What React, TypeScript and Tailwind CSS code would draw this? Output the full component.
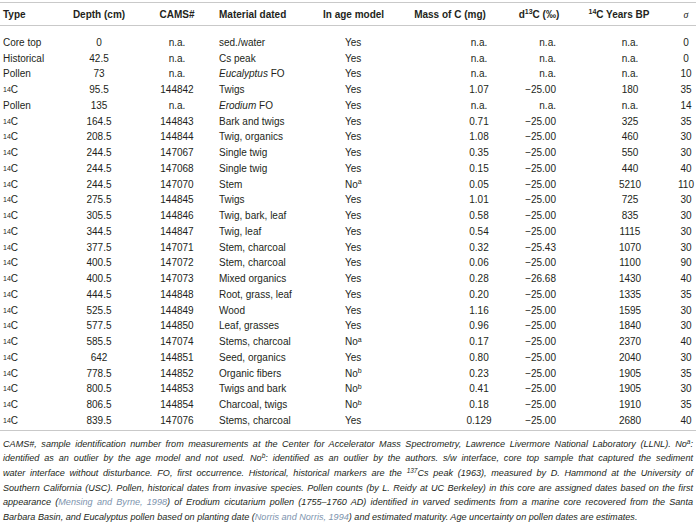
import type { ReactNode } from "react";

type Row = [string, string, string, ReactNode, ReactNode, string, string, string, string];

const C14 = (
  <>
    <sup className="text-[7px] relative -top-[1px]">14</sup>C
  </>
);
const noA = (
  <>
    No<sup className="text-[7px]">a</sup>
  </>
);
const noB = (
  <>
    No<sup className="text-[7px]">b</sup>
  </>
);

const rows: Row[] = [
  ["Core top", "0", "n.a.", "sed./water", "Yes", "n.a.", "n.a.", "n.a.", "0"],
  ["Historical", "42.5", "n.a.", "Cs peak", "Yes", "n.a.", "n.a.", "n.a.", "0"],
  ["Pollen", "73", "n.a.", <><i>Eucalyptus</i> FO</>, "Yes", "n.a.", "n.a.", "n.a.", "10"],
  ["14C", "95.5", "144842", "Twigs", "Yes", "1.07", "−25.00", "180", "35"],
  ["Pollen", "135", "n.a.", <><i>Erodium</i> FO</>, "Yes", "n.a.", "n.a.", "n.a.", "14"],
  ["14C", "164.5", "144843", "Bark and twigs", "Yes", "0.71", "−25.00", "325", "35"],
  ["14C", "208.5", "144844", "Twig, organics", "Yes", "1.08", "−25.00", "460", "30"],
  ["14C", "244.5", "147067", "Single twig", "Yes", "0.35", "−25.00", "550", "30"],
  ["14C", "244.5", "147068", "Single twig", "Yes", "0.15", "−25.00", "440", "40"],
  ["14C", "244.5", "147070", "Stem", noA, "0.05", "−25.00", "5210", "110"],
  ["14C", "275.5", "144845", "Twigs", "Yes", "1.01", "−25.00", "725", "30"],
  ["14C", "305.5", "144846", "Twig, bark, leaf", "Yes", "0.58", "−25.00", "835", "30"],
  ["14C", "344.5", "144847", "Twig, leaf", "Yes", "0.54", "−25.00", "1115", "30"],
  ["14C", "377.5", "147071", "Stem, charcoal", "Yes", "0.32", "−25.43", "1070", "30"],
  ["14C", "400.5", "147072", "Stem, charcoal", "Yes", "0.06", "−25.00", "1100", "90"],
  ["14C", "400.5", "147073", "Mixed organics", "Yes", "0.28", "−26.68", "1430", "40"],
  ["14C", "444.5", "144848", "Root, grass, leaf", "Yes", "0.20", "−25.00", "1335", "35"],
  ["14C", "525.5", "144849", "Wood", "Yes", "1.16", "−25.00", "1595", "30"],
  ["14C", "577.5", "144850", "Leaf, grasses", "Yes", "0.96", "−25.00", "1840", "30"],
  ["14C", "585.5", "147074", "Stems, charcoal", noA, "0.17", "−25.00", "2370", "40"],
  ["14C", "642", "144851", "Seed, organics", "Yes", "0.80", "−25.00", "2040", "30"],
  ["14C", "778.5", "144852", "Organic fibers", noB, "0.23", "−25.00", "1905", "35"],
  ["14C", "800.5", "144853", "Twigs and bark", noB, "0.41", "−25.00", "1905", "30"],
  ["14C", "806.5", "144854", "Charcoal, twigs", noB, "0.18", "−25.00", "1910", "35"],
  ["14C", "839.5", "147076", "Stems, charcoal", "Yes", "0.129", "−25.00", "2680", "40"],
];

const grid = "grid grid-cols-[60px_78px_78px_104px_80px_100px_78px_82px_36px]";

const cellCls = [
  "pl-[3px] text-left",
  "text-center",
  "text-center",
  "pl-[3px] text-left",
  "pl-[25px] text-left",
  "text-center pl-[58px]",
  "text-right pr-[22px]",
  "text-center pl-[22px]",
  "text-center pl-[16px]",
];

const headCls = [
  "pl-[3px] text-left",
  "text-center",
  "text-center",
  "pl-[3px] text-left",
  "pl-[3px] text-left",
  "text-center",
  "text-center",
  "text-center",
  "text-center pl-[16px]",
];

const ref = "text-[#7d93ad]";
const line = "text-justify [text-align-last:justify] whitespace-nowrap";

export default function App() {
  return (
    <div className="w-[696px] h-[525px] bg-white text-[#231f20] font-['Liberation_Sans',Arial,sans-serif] overflow-hidden">
      <div className="mt-[2px] border-t-[1.5px] border-[#c9c9c9]" />
      <div className={`${grid} h-[23px] items-center text-[10px] font-bold border-b-[1.5px] border-[#c9c9c9]`}>
        {[
          "Type",
          "Depth (cm)",
          "CAMS#",
          "Material dated",
          "In age model",
          "Mass of C (mg)",
          <>d<sup className="text-[7px]">13</sup>C (‰)</>,
          <><sup className="text-[7px]">14</sup>C Years BP</>,
          <span className="font-['Liberation_Serif',serif] italic font-normal">σ</span>,
        ].map((h, i) => (
          <div key={i} className={headCls[i]}>
            {h}
          </div>
        ))}
      </div>
      <div className="pt-[9px] pb-[1px] border-b-[1.5px] border-[#c9c9c9] text-[10px]">
        {rows.map((r, ri) => (
          <div key={ri} className={`${grid} h-[15.75px] items-center`}>
            {r.map((c, ci) => (
              <div key={ci} className={`${cellCls[ci]} whitespace-nowrap leading-none`}>
                {ci === 0 && c === "14C" ? C14 : c}
              </div>
            ))}
          </div>
        ))}
      </div>
      <div className="pt-[6px] px-[3px] text-[9.1px] leading-[14.6px] italic text-[#231f20]">
        <div className={line}>
          CAMS#, sample identification number from measurements at the Center for Accelerator Mass Spectrometry,
          Lawrence Livermore National Laboratory (LLNL). No<sup className="text-[6.5px]">a</sup>:
        </div>
        <div className={line}>
          identified as an outlier by the age model and not used. No<sup className="text-[6.5px]">b</sup>: identified
          as an outlier by the authors. s/w interface, core top sample that captured the sediment
        </div>
        <div className={line}>
          water interface without disturbance. FO, first occurrence. Historical, historical markers are the{" "}
          <sup className="text-[6.5px]">137</sup>Cs peak (1963), measured by D. Hammond at the University of
        </div>
        <div className={line}>
          Southern California (USC). Pollen, historical dates from invasive species. Pollen counts (by L. Reidy at UC
          Berkeley) in this core are assigned dates based on the first
        </div>
        <div className={line}>
          appearance (<span className={ref}>Mensing and Byrne, 1998</span>) of Erodium cicutarium pollen (1755–1760 AD)
          identified in varved sediments from a marine core recovered from the Santa
        </div>
        <div className="whitespace-nowrap">
          Barbara Basin, and Eucalyptus pollen based on planting date (<span className={ref}>Norris and Norris, 1994</span>
          ) and estimated maturity. Age uncertainty on pollen dates are estimates.
        </div>
      </div>
    </div>
  );
}
